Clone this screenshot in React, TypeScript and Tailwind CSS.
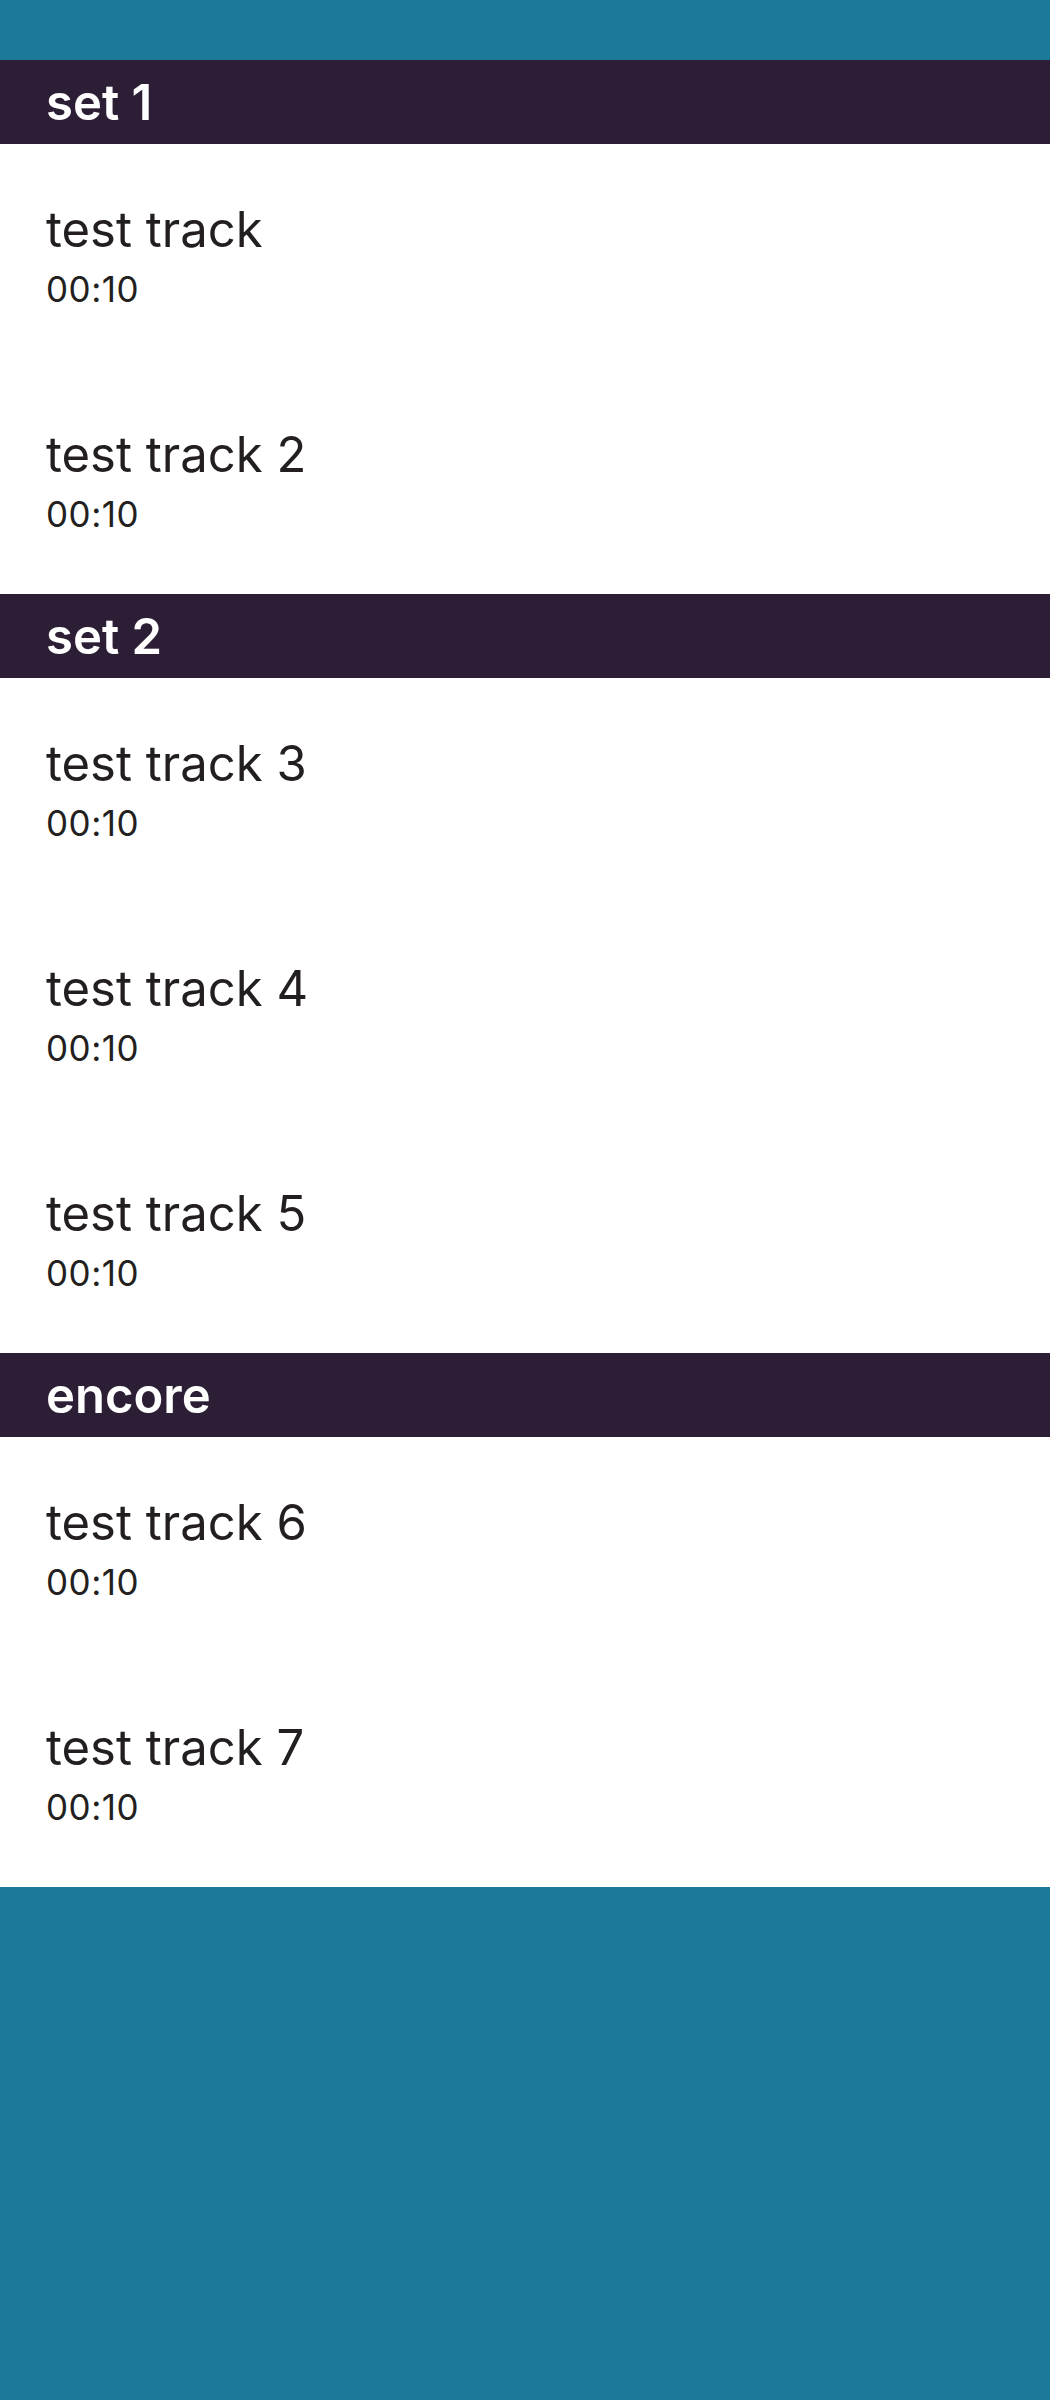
const sets = [
  { name: 'set 1', tracks: [{ title: 'test track', time: '00:10' }, { title: 'test track 2', time: '00:10' }] },
  {
    name: 'set 2',
    tracks: [
      { title: 'test track 3', time: '00:10' },
      { title: 'test track 4', time: '00:10' },
      { title: 'test track 5', time: '00:10' },
    ],
  },
  { name: 'encore', tracks: [{ title: 'test track 6', time: '00:10' }, { title: 'test track 7', time: '00:10' }] },
]

function TrackRow({ title, time }: { title: string; time: string }) {
  return (
    <div className="h-[225px] bg-white pl-[46px] pt-[57px] text-[#231f20]">
      <div className="text-[49px] leading-[58px]">{title}</div>
      <div className="text-[35px] leading-[60px] tracking-[0.5px]">{time}</div>
    </div>
  )
}

export default function App() {
  return (
    <div className="min-h-[2400px] bg-[#1c7a99]" style={{ fontFamily: 'Inter, "Noto Sans", sans-serif' }}>
      <div className="h-[60px]" />
      {sets.map((set) => (
        <section key={set.name}>
          <div className="h-[84px] bg-[#2c1e35] pl-[46px] pt-[2px] text-[49px] font-semibold leading-[82px] text-white">
            {set.name}
          </div>
          {set.tracks.map((t) => (
            <TrackRow key={t.title} title={t.title} time={t.time} />
          ))}
        </section>
      ))}
    </div>
  )
}
